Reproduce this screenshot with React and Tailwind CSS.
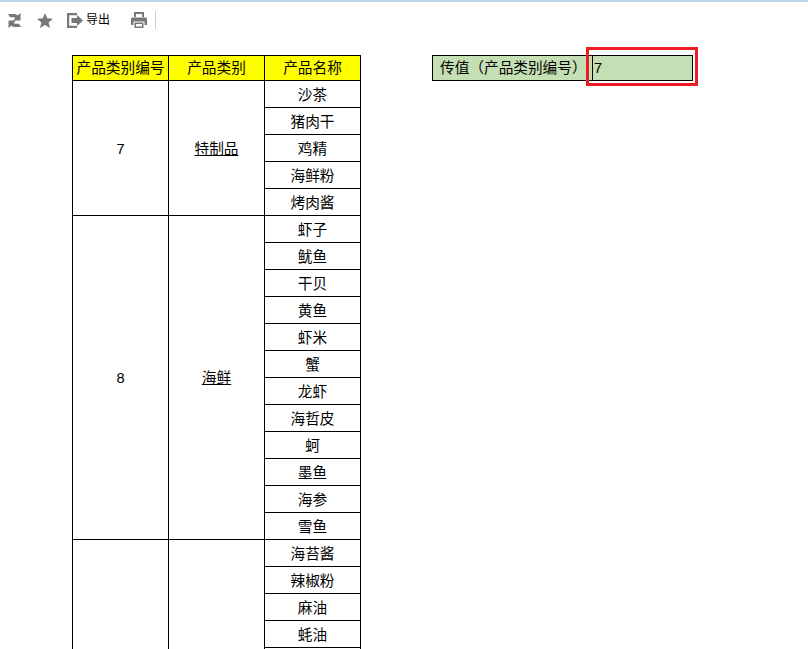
const sections = [
  { id: "7", type: "特制品", items: ["沙茶", "猪肉干", "鸡精", "海鲜粉", "烤肉酱"] },
  { id: "8", type: "海鲜", items: ["虾子", "鱿鱼", "干贝", "黄鱼", "虾米", "蟹", "龙虾", "海哲皮", "蚵", "墨鱼", "海参", "雪鱼"] },
  { id: "", type: "", items: ["海苔酱", "辣椒粉", "麻油", "蚝油", ""] },
];

const cell = "border border-black text-center px-0 pb-0";

function RefreshIcon() {
  return (
    <svg width="13" height="15" viewBox="0 0 13 15" className="ml-[8px]" fill="#777">
      <path d="M0 1h6c1.500 0 2.500.5 3.500 1.500L12.500 0v7.500H5l2.300-2.300C6.800 4.600 6.200 4.300 5.500 4.300H2z" />
      <path d="M13 14H7c-1.500 0-2.500-.5-3.500-1.500L.5 15V7.500H8l-2.300 2.300c.5.600 1.100.9 1.800.9H11z" />
    </svg>
  );
}

function StarIcon() {
  return (
    <svg width="16" height="15" viewBox="0 0 16 15" className="ml-[16px]" fill="#777">
      <path d="M8 0l2.200 5.200 5.800.5-4.400 3.700 1.400 5.600L8 12l-5 3 1.400-5.600L0 5.700l5.800-.5z" />
    </svg>
  );
}

function ExportIcon() {
  return (
    <svg width="16" height="15" viewBox="0 0 16 15" fill="#777">
      <path d="M0 0h10v2.200H2.200v10.600H10V15H0z" />
      <path d="M4.500 5h5.500V2l6 5.500-6 5.500v-3H4.500z" />
    </svg>
  );
}

function PrintIcon() {
  return (
    <svg width="16" height="16" viewBox="0 0 16 16" className="ml-[21px]" fill="#777">
      <path d="M3 0h10v5h-2V2H5v3H3z" />
      <path d="M1.500 5.500h13c.9 0 1.500.6 1.500 1.500v6h-2.500V9.500h-11V13H0V7c0-.9.600-1.500 1.500-1.500z" />
      <path d="M3.500 10.500h9V16h-9zM5 12v2.500h6V12z" fillRule="evenodd" />
    </svg>
  );
}

export default function App() {
  return (
    <div
      className="h-[649px] w-[808px] overflow-hidden bg-white text-black"
      style={{ fontFamily: '"Liberation Sans", "Noto Sans CJK SC", sans-serif' }}
    >
      <div className="h-[2px] bg-[#bcd4e8]" />

      {/* toolbar */}
      <div className="flex h-[26px] items-center mt-[5px]">
        <RefreshIcon />
        <StarIcon />
        <div className="ml-[14px] flex items-center">
          <ExportIcon />
          <span className="ml-[3px] text-[12px] leading-none">导出</span>
        </div>
        <PrintIcon />
        <div className="ml-[8px] h-[18px] w-px bg-[#ccc]" />
      </div>

      <div className="flex items-start pl-[72px] mt-[22px]">
        <table className="border-collapse table-fixed w-[289px] text-[14.67px]">
          <colgroup>
            <col className="w-[96px]" />
            <col className="w-[96px]" />
            <col className="w-[96px]" />
          </colgroup>
          <thead>
            <tr className="h-[25px] bg-[#ffff00]">
              <th className={`${cell} pt-0 font-normal`}>产品类别编号</th>
              <th className={`${cell} pt-0 font-normal`}>产品类别</th>
              <th className={`${cell} pt-0 font-normal`}>产品名称</th>
            </tr>
          </thead>
          <tbody>
            {sections.map((s, i) =>
              s.items.map((item, j) => (
                <tr key={`${i}-${j}`} className="h-[27px]">
                  {j === 0 && (
                    <>
                      <td rowSpan={s.items.length} className={`${cell} pt-px`}>{s.id}</td>
                      <td rowSpan={s.items.length} className={`${cell} pt-px underline`}>{s.type}</td>
                    </>
                  )}
                  <td className={`${cell} pt-px`}>{item}</td>
                </tr>
              ))
            )}
          </tbody>
        </table>

        {/* parameter box */}
        <div className="ml-[71px] flex h-[26px] w-[261px] border border-black bg-[#c4dfb4] text-[14.67px]">
          <div className="flex w-[160px] items-center border-r border-black pl-[7px] whitespace-nowrap">
            传值（产品类别编号）
          </div>
          <div className="relative flex flex-1 items-center pl-[1px]">
            7
            <div className="absolute -left-[7px] -top-[9px] h-[39px] w-[112px] border-[3px] border-[#ed1c24]" />
          </div>
        </div>
      </div>
    </div>
  );
}
